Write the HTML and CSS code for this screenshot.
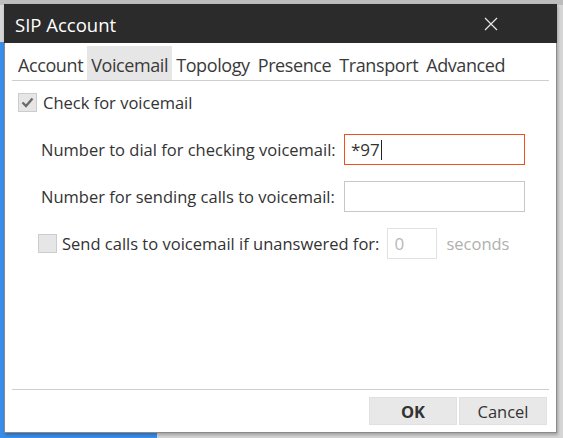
FILE: index.html
```html
<!DOCTYPE html>
<html>
<head>
<meta charset="utf-8">
<link rel="stylesheet" href="styles.css">
</head>
<body>
<div class="dialog">
  <div class="titlebar">
    <span class="title">SIP Account</span>
    <svg class="close" width="14" height="14" viewBox="0 0 14 14"><path d="M1 1 L13 13 M13 1 L1 13" stroke="#e8e8e8" stroke-width="1.2" fill="none"/></svg>
  </div>
  <div class="tabs">
    <span class="tab">Account</span>
    <span class="tab active">Voicemail</span>
    <span class="tab">Topology</span>
    <span class="tab">Presence</span>
    <span class="tab">Transport</span>
    <span class="tab">Advanced</span>
  </div>
  <div class="content">
    <label class="check-row">
      <span class="box"><svg width="19" height="19" viewBox="0 0 19 19"><path d="M4.5 9.5 L8 13 L14.5 5.5" stroke="#6b6b6b" stroke-width="2.4" fill="none"/></svg></span>
      <span>Check for voicemail</span>
    </label>
    <div class="form">
      <span class="label">Number to dial for checking voicemail:</span>
      <div class="input focused">*97<span class="caret"></span></div>
      <span class="label">Number for sending calls to voicemail:</span>
      <div class="input"></div>
    </div>
    <div class="unanswered">
      <span class="box"></span>
      <span class="label">Send calls to voicemail if unanswered for:</span>
      <div class="input small">0</div>
      <span class="muted">seconds</span>
    </div>
  </div>
  <div class="footer">
    <button class="btn ok">OK</button>
    <button class="btn">Cancel</button>
  </div>
</div>
</body>
</html>
```
FILE: styles.css
```css
html, body {
  margin: 0;
  height: 100%;
}
body {
  width: 563px;
  height: 438px;
  overflow: hidden;
  background:
    linear-gradient(#3a8eea, #3a8eea) no-repeat 0 42px / 157px 100%,
    linear-gradient(#bdbdbd, #bdbdbd) no-repeat 0 0 / 100% 5px,
    #d6d6d6;
  padding: 4px 0 0 4px;
  box-sizing: border-box;
  font-family: "Open Sans", "Noto Sans", sans-serif;
  color: #333;
}
.dialog {
  width: 553px;
  height: 429px;
  background: #fff;
  border: 1px solid #8a8a8a;
  border-top: none;
  box-sizing: border-box;
  display: flex;
  flex-direction: column;
  box-shadow: 1px 2px 3px rgba(0,0,0,0.25);
}
.titlebar {
  height: 39px;
  background: #2b2b2b;
  display: flex;
  align-items: center;
  justify-content: space-between;
  padding: 1px 59px 0 11px;
  margin: 0 -1px;
  flex-shrink: 0;
  box-sizing: border-box;
}
.title {
  color: #fff;
  font-size: 18.5px;
}
.close {
  display: block;
}
.tabs {
  display: flex;
  margin: 3px 7px 0 7px;
  padding-left: 2px;
  border-bottom: 1px solid #cfcfcf;
  height: 34px;
}
.tab {
  padding: 4px 4px 0;
  font-size: 18px;
  line-height: 30px;
  color: #3a3a3a;
  letter-spacing: -0.4px;
}
.tab.active {
  background: #e6e6e6;
}
.content {
  flex: 1;
  padding: 12px 0 0 13px;
  font-size: 16.5px;
}
.check-row {
  display: flex;
  align-items: center;
  gap: 6px;
  height: 19px;
}
.box {
  width: 19px;
  height: 19px;
  background: #e6e6e6;
  border: 1px solid #cccccc;
  box-sizing: border-box;
  display: flex;
  align-items: center;
  justify-content: center;
  flex-shrink: 0;
}
.box svg {
  display: block;
  margin: -1px;
}
.form {
  display: grid;
  grid-template-columns: 297px 181px;
  column-gap: 6px;
  row-gap: 16px;
  align-items: center;
  margin: 22px 0 0 23px;
}
.label {
  white-space: nowrap;
}
.input {
  height: 31px;
  border: 1px solid #c8c8c8;
  box-sizing: border-box;
  padding: 0 6px;
  display: flex;
  align-items: center;
  font-size: 17px;
  color: #333;
}
.input.focused {
  border-color: #f0501e;
}
.caret {
  display: inline-block;
  width: 1px;
  height: 20px;
  background: #222;
  margin-left: 1px;
}
.unanswered {
  display: flex;
  align-items: center;
  margin: 16px 0 0 20px;
  height: 31px;
}
.unanswered .label {
  margin: 0 8px 0 5px;
}
.input.small {
  width: 50px;
  flex-shrink: 0;
  color: #b8b8b8;
  border-color: #e2e2e2;
}
.muted {
  color: #b0b0b0;
  margin-left: 9px;
}
.footer {
  margin: 0 7px;
  border-top: 1px solid #cfcfcf;
  padding: 7px 2px 7px 0;
  display: flex;
  justify-content: flex-end;
  gap: 2px;
}
.btn {
  width: 88px;
  height: 28px;
  border: 1px solid #e0e0e0;
  background: #e8e8e8;
  font-family: "Open Sans", "Noto Sans", sans-serif;
  font-size: 16.5px;
  color: #333;
  padding: 0;
}
.btn.ok {
  font-weight: bold;
}
```
